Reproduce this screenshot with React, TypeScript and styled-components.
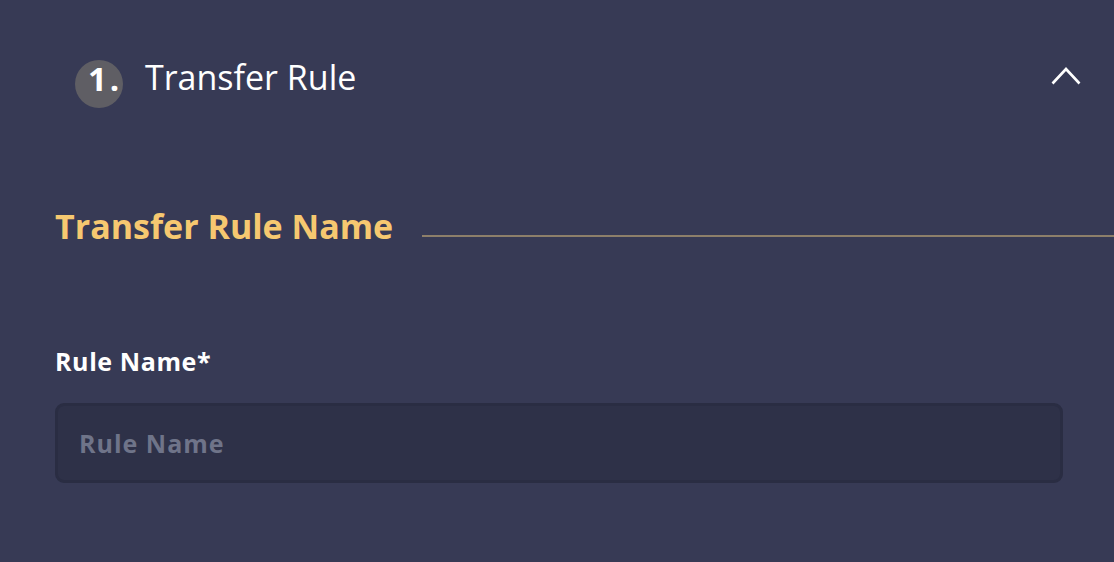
import React from "react";
import styled, { createGlobalStyle } from "styled-components";

const GlobalStyle = createGlobalStyle`
  html, body {
    margin: 0;
    padding: 0;
    background: #373a55;
  }
  body {
    font-family: "Open Sans", "Lato", sans-serif;
  }
`;

const Page = styled.div`
  width: 1114px;
  height: 562px;
  background: #373a55;
  overflow: hidden;
`;

const Header = styled.div`
  display: flex;
  align-items: center;
  padding: 57px 33px 0 75px;
`;

const StepBadge = styled.div`
  display: flex;
  align-items: center;
  width: 48px;
  height: 48px;
  box-sizing: border-box;
  padding: 0 0 11px 13px;
  border-radius: 50%;
  background: #5f5e64;
  flex-shrink: 0;
`;

const StepNumber = styled.span`
  color: #ffffff;
  font-size: 33px;
  font-weight: 700;
  line-height: 1;
  letter-spacing: 3px;
  white-space: nowrap;
`;

const Title = styled.h2`
  flex: 1;
  margin: 0 0 14px 22px;
  color: #ffffff;
  font-size: 34px;
  font-weight: 400;
  line-height: 40px;
`;

const Chevron = styled.svg`
  width: 30px;
  height: 18px;
  margin-bottom: 16px;
`;

const Body = styled.div`
  display: flex;
  flex-direction: column;
  padding: 0 51px 0 55px;
`;

const SectionHeading = styled.div`
  display: flex;
  align-items: center;
  gap: 29px;
  margin: 93px -51px 0 0;
`;

const SectionTitle = styled.h3`
  margin: 0;
  color: #f6c870;
  font-size: 34px;
  font-weight: 700;
  line-height: 44px;
  white-space: nowrap;
`;

const Rule = styled.div`
  flex: 1;
  height: 2px;
  margin-top: 20px;
  background: #8d7f6a;
`;

const Label = styled.label`
  margin-top: 98px;
  color: #ffffff;
  font-size: 25px;
  font-weight: 700;
  line-height: 30px;
  letter-spacing: 0.6px;
`;

const Input = styled.input`
  box-sizing: border-box;
  width: 100%;
  height: 80px;
  margin-top: 27px;
  padding: 0 21px;
  background: #2e3148;
  border: 3px solid #2a2d43;
  border-radius: 9px;
  color: #ffffff;
  font-family: "Open Sans", "Lato", sans-serif;
  font-size: 25px;
  font-weight: 700;
  letter-spacing: 1px;
  outline: none;

  &::placeholder {
    color: #6f7489;
  }
`;

export default function App() {
  return (
    <Page>
      <GlobalStyle />
      <Header>
        <StepBadge>
          <StepNumber>1.</StepNumber>
        </StepBadge>
        <Title>Transfer Rule</Title>
        <Chevron viewBox="0 0 30 18" fill="none">
          <path d="M1.5 16.5 L15 2 L28.5 16.5" stroke="#ffffff" strokeWidth="2.6" />
        </Chevron>
      </Header>
      <Body>
        <SectionHeading>
          <SectionTitle>Transfer Rule Name</SectionTitle>
          <Rule />
        </SectionHeading>
        <Label>Rule Name*</Label>
        <Input placeholder="Rule Name" />
      </Body>
    </Page>
  );
}
